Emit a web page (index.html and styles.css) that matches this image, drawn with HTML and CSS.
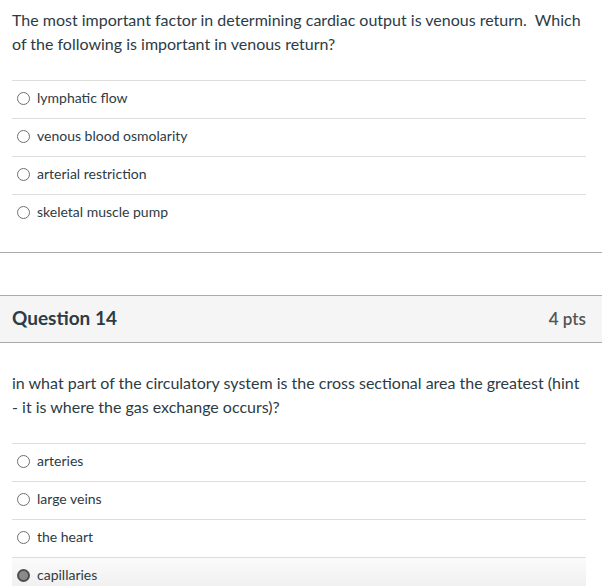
FILE: index.html
```html
<!DOCTYPE html>
<html>
<head>
<meta charset="utf-8">
<link rel="stylesheet" href="styles.css">
</head>
<body>
<div class="question">
  <div class="qtext">The most important factor in determining cardiac output is venous return.&nbsp; Which of the following is important in venous return?</div>
  <div class="answers">
    <div class="answer"><span class="radio"></span><span class="label">lymphatic flow</span></div>
    <div class="answer"><span class="radio"></span><span class="label">venous blood osmolarity</span></div>
    <div class="answer"><span class="radio"></span><span class="label">arterial restriction</span></div>
    <div class="answer"><span class="radio"></span><span class="label">skeletal muscle pump</span></div>
  </div>
</div>
<div class="spacer"></div>
<div class="qheader">
  <div class="qtitle">Question 14</div>
  <div class="qpts">4 pts</div>
</div>
<div class="question q2">
  <div class="qtext">in what part of the circulatory system is the cross sectional area the greatest (hint - it is where the gas exchange occurs)?</div>
  <div class="answers">
    <div class="answer"><span class="radio"></span><span class="label">arteries</span></div>
    <div class="answer"><span class="radio"></span><span class="label">large veins</span></div>
    <div class="answer"><span class="radio"></span><span class="label">the heart</span></div>
    <div class="answer selected"><span class="radio checked"></span><span class="label">capillaries</span></div>
  </div>
</div>
</body>
</html>
```

FILE: styles.css
```css
html, body {
  margin: 0;
  padding: 0;
  background: #ffffff;
}
body {
  font-family: Lato, "Open Sans", sans-serif;
  color: #2d3b45;
  width: 602px;
  height: 586px;
  overflow: hidden;
}
.question {
  padding: 8px 16px 20px 12px;
  border-bottom: 1px solid #aaaaaa;
}
.question.q2 {
  padding-top: 28px;
  border-bottom: none;
}
.qtext {
  font-size: 16px;
  line-height: 24px;
}
.answers {
  margin-top: 24px;
}
.answer {
  display: flex;
  align-items: center;
  height: 37px;
  border-top: 1px solid #dddddd;
  font-size: 14px;
}
.label {
  position: relative;
  top: -2px;
}
.answer.selected {
  background: linear-gradient(#fbfbfb, #ededed);
}
.radio {
  box-sizing: border-box;
  width: 13px;
  height: 13px;
  border-radius: 50%;
  border: 1px solid #6f6f6f;
  margin-left: 5px;
  margin-right: 7px;
  background: #fff;
  position: relative;
  top: -1px;
}
.radio.checked {
  border: 2px solid #4f4f4f;
  background: #8a8a8a;
}
.spacer {
  height: 42px;
}
.qheader {
  display: flex;
  justify-content: space-between;
  align-items: center;
  height: 46px;
  padding: 0 16px 0 12px;
  background: #f5f5f5;
  border-top: 1px solid #aaaaaa;
  border-bottom: 1px solid #aaaaaa;
}
.qtitle {
  font-size: 19px;
  font-weight: 700;
  color: #2d3b45;
  position: relative;
  top: -2px;
}
.qpts {
  font-size: 17px;
  font-weight: 600;
  color: #555555;
  position: relative;
  top: -1px;
}
```
